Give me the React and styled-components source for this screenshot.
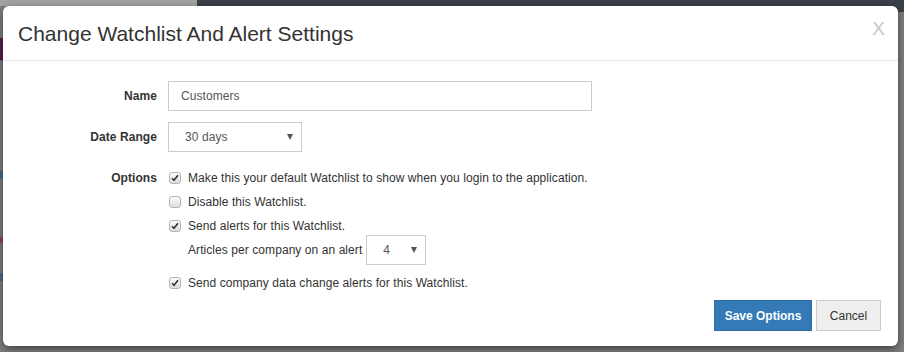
import React from "react";
import styled, { createGlobalStyle } from "styled-components";

const GlobalStyle = createGlobalStyle`
  body {
    margin: 0;
    font-family: "Liberation Sans", Arial, Helvetica, sans-serif;
    color: #333;
  }
`;

const Screen = styled.div`
  position: relative;
  width: 904px;
  height: 352px;
  overflow: hidden;
  background: #7f7f7f;
`;

const TopBar = styled.div`
  display: flex;
  height: 12px;
`;

const TopBarLeft = styled.div`
  width: 197px;
  height: 6px;
  background: #a3a3a3;
`;

const TopBarRight = styled.div`
  flex: 1;
  background: #3b3f47;
`;

const SideMarks = styled.div`
  display: flex;
  flex-direction: column;
  width: 3px;
  padding-top: 26px;
`;

const Mark = styled.div`
  height: ${(p) => p.h}px;
  margin-bottom: ${(p) => p.gap}px;
  background: ${(p) => p.color};
`;

const Modal = styled.div`
  position: absolute;
  left: 3px;
  top: 6px;
  width: 895px;
  height: 340px;
  box-sizing: border-box;
  background: #fff;
  border-radius: 6px;
  box-shadow: 0 3px 9px rgba(0, 0, 0, 0.5);
  display: flex;
  flex-direction: column;
`;

const Header = styled.div`
  height: 60px;
  border-bottom: 1px solid #e5e5e5;
  display: flex;
  align-items: center;
  justify-content: space-between;
  padding: 0 13px 0 15px;
`;

const Title = styled.h4`
  margin: 0;
  font-size: 21px;
  font-weight: normal;
  color: #333;
  padding-top: 2px;
`;

const Close = styled.button`
  border: 0;
  background: none;
  padding: 0;
  font-family: inherit;
  font-size: 19px;
  color: #c8c8c8;
  cursor: pointer;
  margin-top: -8px;
`;

const Body = styled.div`
  padding: 20px 17px 15px 0;
  display: flex;
  flex-direction: column;
`;

const Form = styled.div`
  display: grid;
  grid-template-columns: 154px 1fr;
  column-gap: 11px;
  font-size: 12px;
  letter-spacing: 0.07px;
`;

const Label = styled.div`
  text-align: right;
  font-weight: bold;
  line-height: ${(p) => p.lh}px;
  margin-top: ${(p) => p.mt || 0}px;
`;

const Field = styled.div`
  margin-top: ${(p) => p.mt || 0}px;
  display: flex;
  flex-direction: column;
`;

const TextInput = styled.input`
  width: 424px;
  height: 30px;
  box-sizing: border-box;
  border: 1px solid #ccc;
  padding: 0 12px;
  font-family: inherit;
  font-size: 12px;
  letter-spacing: inherit;
  color: #555;
  outline: none;
`;

const SelectBox = styled.div`
  width: ${(p) => p.w}px;
  height: 30px;
  box-sizing: border-box;
  border: 1px solid #ccc;
  display: flex;
  align-items: center;
  justify-content: space-between;
  padding: 0 8px 0 ${(p) => p.pl}px;
  font-size: 12px;
  color: #555;
  margin: ${(p) => (p.inline ? "-3px 0 -3px 4px" : "0")};
  background: #fff;
`;

const Caret = styled.span`
  width: 0;
  height: 0;
  border-left: 3px solid transparent;
  border-right: 3px solid transparent;
  border-top: 6px solid #555;
`;

const CheckRow = styled.label`
  display: flex;
  align-items: center;
  height: 24px;
  gap: 7px;
  color: #333;
  margin-top: ${(p) => p.mt || 0}px;
`;

const Box = styled.span`
  width: 12px;
  height: 12px;
  box-sizing: border-box;
  border: 1px solid #b4b4b4;
  border-radius: 3px;
  background: linear-gradient(#fbfbfb, #dedede);
  display: flex;
  align-items: center;
  justify-content: center;
  margin-left: 1px;
`;

const SubRow = styled.div`
  display: flex;
  align-items: center;
  height: 24px;
  padding-left: 20px;
`;

const Footer = styled.div`
  display: flex;
  justify-content: flex-end;
  gap: 4px;
  margin-top: 5px;
`;

const Button = styled.button`
  width: ${(p) => p.w}px;
  height: 31px;
  padding: 0;
  font-family: inherit;
  font-size: 12px;
  font-weight: ${(p) => (p.primary ? "bold" : "normal")};
  color: ${(p) => (p.primary ? "#fff" : "#333")};
  background: ${(p) => (p.primary ? "#337ab7" : "#eee")};
  border: 1px solid ${(p) => (p.primary ? "#2e6da4" : "#ccc")};
  border-radius: 0;
  cursor: pointer;
`;

const Check = ({ checked, children, mt }) => (
  <CheckRow mt={mt}>
    <Box>
      {checked && (
        <svg width="8" height="8" viewBox="0 0 8 8">
          <path d="M1 4.2 L3 6.3 L7 1.2" fill="none" stroke="#333" strokeWidth="1.6" />
        </svg>
      )}
    </Box>
    {children}
  </CheckRow>
);

export default function App() {
  return (
    <Screen>
      <GlobalStyle />
      <TopBar>
        <TopBarLeft />
        <TopBarRight />
      </TopBar>
      <SideMarks>
        <Mark h={22} gap={0} color="#5a2050" />
        <Mark h={1} gap={110} color="#6a6a6a" />
        <Mark h={8} gap={58} color="#4a6a90" />
        <Mark h={6} gap={30} color="#a04060" />
        <Mark h={8} gap={60} color="#4a6a90" />
      </SideMarks>
      <Modal>
        <Header>
          <Title>Change Watchlist And Alert Settings</Title>
          <Close>X</Close>
        </Header>
        <Body>
          <Form>
            <Label lh={30}>Name</Label>
            <Field>
              <TextInput defaultValue="Customers" />
            </Field>

            <Label lh={30} mt={11}>Date Range</Label>
            <Field mt={11}>
              <SelectBox w={134} pl={16}>
                30 days
                <Caret />
              </SelectBox>
            </Field>

            <Label lh={24} mt={14}>Options</Label>
            <Field mt={14}>
              <Check checked>Make this your default Watchlist to show when you login to the application.</Check>
              <Check>Disable this Watchlist.</Check>
              <Check checked>Send alerts for this Watchlist.</Check>
              <SubRow>
                Articles per company on an alert
                <SelectBox w={60} pl={16} inline>
                  4
                  <Caret />
                </SelectBox>
              </SubRow>
              <Check checked mt={9}>Send company data change alerts for this Watchlist.</Check>
            </Field>
          </Form>
          <Footer>
            <Button primary w={98}>Save Options</Button>
            <Button w={65}>Cancel</Button>
          </Footer>
        </Body>
      </Modal>
    </Screen>
  );
}
